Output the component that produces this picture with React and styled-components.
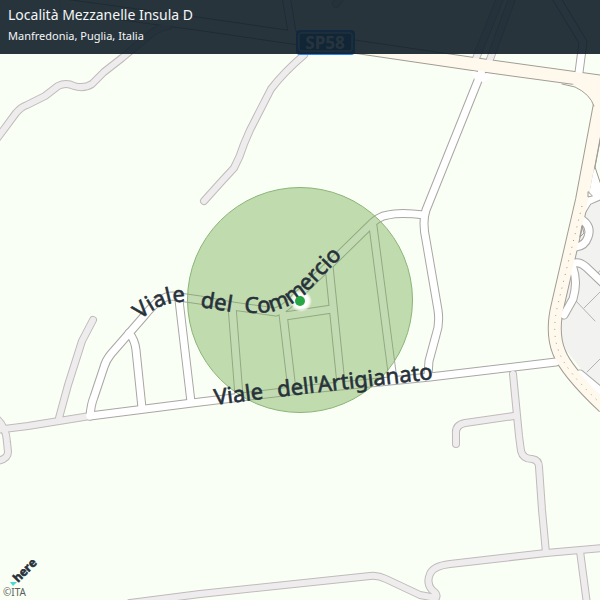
import React from 'react';
import styled, { createGlobalStyle } from 'styled-components';

const GlobalStyle = createGlobalStyle`
  body {
    margin: 0;
    background: #fafff5;
    font-family: "Noto Sans", "Open Sans", sans-serif;
  }
`;

const MapCard = styled.main`
  display: grid;
  grid-template-columns: minmax(0, 1fr);
  overflow: hidden;
`;

const MapCanvas = styled.svg`
  grid-area: 1 / 1;
  display: block;
  width: 100%;
  height: auto;
  background: #fafff5;
`;

const Header = styled.header`
  grid-area: 1 / 1;
  align-self: start;
  z-index: 1;
  display: flex;
  flex-direction: column;
  gap: 4px;
  padding: 6px 8px 12px;
  background: rgba(15, 30, 40, 0.9);
  color: #f4f6f7;
`;

const Title = styled.h1`
  margin: 0;
  font-size: 14px;
  line-height: 18px;
  font-weight: 400;
`;

const Subtitle = styled.p`
  margin: 0;
  font-size: 11px;
  line-height: 16px;
  margin-bottom: -2px;
`;

const Strokes = styled.g`
  fill: none;
  stroke: ${(p) => p.$color};
  stroke-width: ${(p) => p.$width}px;
  stroke-linecap: ${(p) => p.$cap || 'round'};
  stroke-linejoin: round;
`;

const RoadLabel = styled.text`
  font-size: 22px;
  fill: #26313a;
  stroke: #26313a;
  stroke-width: 0.6px;
`;

const Shield = styled.text`
  font-size: 17px;
  font-weight: 700;
  fill: #ffffff;
  text-anchor: middle;
`;

const Brand = styled.text`
  font-family: "Open Sans", sans-serif;
  font-size: 12px;
  font-weight: 700;
  fill: #26313a;
  stroke: #26313a;
  stroke-width: 0.6px;
`;

const Copyright = styled.text`
  font-size: 10px;
  fill: #5a5e60;
`;

const tracks = [
  'M-4 140 L16 113 Q21 107 27 105 L45 96 L58 86 Q66 82 74 86 Q84 89 92 84 Q98 78 104 72 L122 58 L146 38 Q156 28 168 26',
  'M204 201 L222 181 L234 168 Q240 157 244 144 L250 130 L271 89 Q284 72 304 55',
  'M93 320 L82 341 L68 385 L59 418',
  'M-4 430 L28 426 L90 416',
  'M-8 415 Q6 424 7 442 L8 452 Q8 459 -3 461',
  'M513 374 L519 436 L521 451 Q523 459 532 459 Q539 460 539 467 L542 510 L546 553',
  'M514 416 L465 423 Q455 425 456 434 L456 444',
  'M130 603 L200 594 L370 576 Q378 575 386 579 L420 595 L436 598 Q438 594 432 590 Q426 583 430 574 Q433 566 450 564 L546 553 L604 548',
  'M580 551 L587 604',
  'M475 61 L501 -4',
  'M489 62 L513 -4',
  'M336 4 L342 -4',
];

const streets = [
  'M90 416 Q91 404 94 397 L104 367 Q106 360 111 354 L145 315 Q160 296 172 296 L200 300 L232 306 L276 312 Q284 309 290 303 L322 272 L367 228 Q378 216 388 215 Q400 212 424 215',
  'M90 416 L200 402 L300 390 L430 377 L556 362',
  'M129 333 Q135 340 136 350 L142 408',
  'M179 300 L191 402',
  'M232 306 L239 396',
  'M283 314 L292 390',
  'M285 316 L332 309',
  'M329 266 L341 384',
  'M373 226 L393 380',
  'M483 68 L426 210 Q422 222 426 240 L438 310 Q440 324 436 335 L429 361 L428 375',
  'M578 80 L583 42 L555 -4',
  'M286 -4 L292 32',
];

const lanes = [
  'M581 219 Q592 226 588 237 Q585 246 576 247',
  'M575 263 Q580 262 586 267 L604 284',
  'M573 268 Q578 282 573 299 L564 315',
  'M604 194 L588 201 L580 214',
  'M580 374 L604 394',
];

const highway = [
  'M60 5 L200 24 L330 43 L480 65 L604 82',
  'M600 104 L582 200 L558 304 Q551 332 559 352 Q566 371 604 407',
];

function Paths({ list }) {
  return list.map((d) => <path key={d} d={d} />);
}

export default function App() {
  return (
    <>
      <GlobalStyle />
      <MapCard>
        <MapCanvas viewBox="0 0 600 600" role="img" aria-label="Map of Località Mezzanelle Insula D">
          <defs>
            <path id="commercio-west" d="M141 320 Q161 299 193 302" />
            <path id="commercio-middle" d="M200 307 L232 312" />
            <path id="commercio-east" d="M244 312 Q284 318 313 286 L350 248" />
            <path id="artigianato-west" d="M215 405 L270 398" />
            <path id="artigianato-east" d="M278 397 L450 377" />
            <radialGradient id="halo">
              <stop offset="0.6" stopColor="#fff" />
              <stop offset="0.8" stopColor="#fff" stopOpacity="0.7" />
              <stop offset="1" stopColor="#fff" stopOpacity="0" />
            </radialGradient>
          </defs>

          <path d="M604 195 L584 206 L574 262 L556 320 L562 345 L604 398 Z" fill="#f2f2f1" />
          <Strokes $color="#b4b2b3" $width={1}>
            <path d="M575 300 L595 321 M584 308 L604 288 M597 274 L604 266 M587 372 L604 355" />
          </Strokes>

          <Strokes $color="#c0babc" $width={8}><Paths list={tracks} /></Strokes>
          <Strokes $color="#a9a6a5" $width={9}><Paths list={streets} /><Paths list={lanes} /></Strokes>
          <Strokes $color="#a19d94" $width={14} $cap="butt"><Paths list={highway} /></Strokes>
          <Strokes $color="#eeecec" $width={6}><Paths list={tracks} /></Strokes>
          <Strokes $color="#ffffff" $width={7}><Paths list={streets} /><Paths list={lanes} /></Strokes>
          <path d="M588 200 L594 168 L604 194 L600 196 L586 206 Z" fill="#fff" />
          <path d="M471 71 L475 80 L483 82 L496 75 Z" fill="#fff" />
          <Strokes $color="#fff9ed" $width={12} $cap="butt"><Paths list={highway} /></Strokes>
          <path d="M572 84 Q588 90 594 106 L604 110 L604 76 Z" fill="#fff9ed" />
          <Strokes $color="#a19d94" $width={1}>
            <path d="M562 84 L575 87 Q590 94 594 106" />
            <path d="M604 120 L595 167 L602 188" />
            <path d="M588 192 L588 197 L592 196 Z" />
            <path d="M582 226 L584 233 L580 237 Z" />
          </Strokes>
          <g fill="none" stroke="#a4947e" strokeDasharray="1 6">
            <path d="M582 206 L558 304 Q551 332 559 352 Q566 371 600 403" />
          </g>

          <g>
            <rect x="296" y="30" width="59" height="25" rx="4" fill="#2a86ee" />
            <rect x="299" y="33" width="53" height="18" rx="2" fill="#1468b8" stroke="#fff" />
            <Shield x="325" y="49">SP58</Shield>
          </g>

          <circle cx="300" cy="300" r="112.5" fill="#76ad52" fillOpacity="0.44" stroke="#8ab577" />

          <circle cx="301" cy="301" r="11" fill="url(#halo)" />
          <RoadLabel><textPath href="#commercio-west">Viale</textPath></RoadLabel>
          <RoadLabel><textPath href="#commercio-middle">del</textPath></RoadLabel>
          <RoadLabel><textPath href="#commercio-east">Commercio</textPath></RoadLabel>
          <RoadLabel><textPath href="#artigianato-west">Viale</textPath></RoadLabel>
          <RoadLabel><textPath href="#artigianato-east">dell'Artigianato</textPath></RoadLabel>
          <circle cx="300" cy="301" r="5" fill="#28a645" />

          <Brand transform="translate(18 583) rotate(-45)">here</Brand>
          <path d="M10 582 L17 582 L13 586 Z" fill="#48dad0" />
          <Copyright x="3" y="596">©ITA</Copyright>
        </MapCanvas>
        <Header>
          <Title>Località Mezzanelle Insula D</Title>
          <Subtitle>Manfredonia, Puglia, Italia</Subtitle>
        </Header>
      </MapCard>
    </>
  );
}
